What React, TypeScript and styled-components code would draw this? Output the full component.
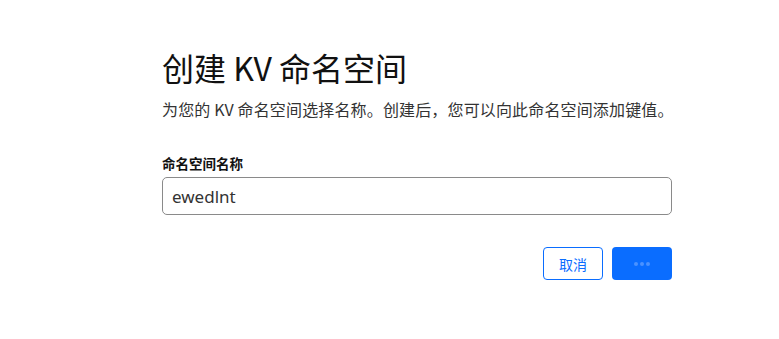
import React from 'react';
import styled, { createGlobalStyle } from 'styled-components';

const GlobalStyle = createGlobalStyle`
  html, body {
    margin: 0;
    padding: 0;
    background: #ffffff;
  }
  body {
    font-family: "Noto Sans CJK SC", "Noto Sans", sans-serif;
    color: #222;
  }
`;

export default function App(): JSX.Element {
  return (
    <>
      <GlobalStyle />
      <Page>
        <Form>
          <Title>创建 KV 命名空间</Title>
          <Subtitle>为您的 KV 命名空间选择名称。创建后，您可以向此命名空间添加键值。</Subtitle>
          <Field>
            <Label>命名空间名称</Label>
            <Input defaultValue="ewedlnt" />
          </Field>
          <Actions>
            <CancelButton>取消</CancelButton>
            <SubmitButton aria-label="loading">
              <Dot />
              <Dot />
              <Dot />
            </SubmitButton>
          </Actions>
        </Form>
      </Page>
    </>
  );
}

const Page = styled.div`
  width: 779px;
  height: 339px;
  padding: 47px 0 0 162px;
  box-sizing: border-box;
`;

const Form = styled.div`
  width: 510px;
  display: flex;
  flex-direction: column;
`;

const Title = styled.h1`
  margin: 0;
  font-size: 32px;
  font-weight: 400;
  line-height: 40px;
  color: #111;
`;

const Subtitle = styled.p`
  margin: 11px 0 0;
  font-size: 16px;
  line-height: 22px;
  letter-spacing: 0.15px;
  color: #333;
  white-space: nowrap;
`;

const Field = styled.div`
  display: flex;
  flex-direction: column;
  margin-top: 33px;
`;

const Label = styled.label`
  font-size: 13.5px;
  font-weight: 700;
  line-height: 20px;
  color: #111;
  margin-bottom: 4px;
`;

const Input = styled.input`
  box-sizing: border-box;
  width: 510px;
  height: 38px;
  padding: 0 9px;
  border: 1px solid #8a8a8a;
  border-radius: 5px;
  font-family: "Noto Sans", "Noto Sans CJK SC", sans-serif;
  font-size: 17px;
  color: #333;
  outline: none;
`;

const Actions = styled.div`
  display: flex;
  justify-content: flex-end;
  gap: 9px;
  margin-top: 32px;
`;

const CancelButton = styled.button`
  box-sizing: border-box;
  width: 60px;
  height: 33px;
  border: 1px solid #0a6dff;
  border-radius: 4px;
  background: #fff;
  color: #0a6dff;
  font-family: "Noto Sans CJK SC", sans-serif;
  font-size: 14px;
  cursor: pointer;
`;

const SubmitButton = styled.button`
  box-sizing: border-box;
  width: 60px;
  height: 33px;
  border: none;
  border-radius: 4px;
  background: #0a6dff;
  display: flex;
  align-items: center;
  justify-content: center;
  gap: 2px;
  padding: 0;
`;

const Dot = styled.span`
  width: 4px;
  height: 4px;
  border-radius: 50%;
  background: #4b92ff;
`;
